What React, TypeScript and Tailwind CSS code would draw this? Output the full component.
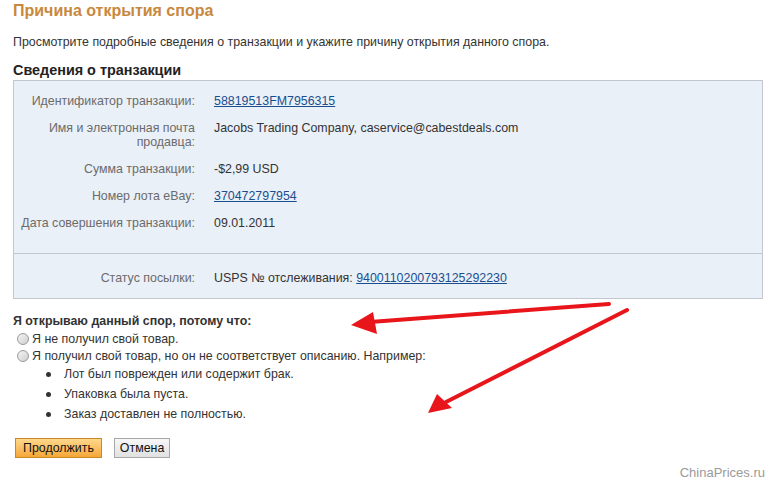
import React from 'react';

interface Row {
  label: string;
  value: string;
  link?: boolean;
}

const rows: Row[] = [
  { label: 'Идентификатор транзакции:', value: '58819513FM7956315', link: true },
  { label: 'Имя и электронная почта продавца:', value: 'Jacobs Trading Company, caservice@cabestdeals.com' },
  { label: 'Сумма транзакции:', value: '-$2,99 USD' },
  { label: 'Номер лота eBay:', value: '370472797954', link: true },
  { label: 'Дата совершения транзакции:', value: '09.01.2011' },
];

const bullets = [
  'Лот был поврежден или содержит брак.',
  'Упаковка была пуста.',
  'Заказ доставлен не полностью.',
];

function Radio() {
  return (
    <span className="inline-block w-[12px] h-[12px] rounded-full border border-[#9a9a9a] bg-gradient-to-br from-[#f4f4f4] to-[#cfcfcf] mr-[3px] shrink-0" />
  );
}

function Arrows() {
  return (
    <svg className="absolute inset-0 pointer-events-none" width="774" height="481">
      <g stroke="#e8161b" strokeWidth="4" strokeLinecap="round" fill="#e8161b">
        <line x1="609" y1="304" x2="370" y2="322" />
        <polygon points="351,325 373,312 377,334" stroke="none" />
        <line x1="627" y1="310" x2="446" y2="402" />
        <polygon points="428,413 437,394 452,408" stroke="none" />
      </g>
    </svg>
  );
}

export default function App() {
  return (
    <div
      className="relative w-[774px] h-[481px] bg-white overflow-hidden text-[12.4px] text-[#333]"
      style={{ fontFamily: '"Liberation Sans", Arial, sans-serif' }}
    >
      <div className="px-[13px]">
        <h1 className="text-[16px] font-bold text-[#c8883d] leading-[20px] pt-[1px]">
          Причина открытия спора
        </h1>
        <p className="mt-[13px] leading-[16px]">
          Просмотрите подробные сведения о транзакции и укажите причину открытия данного спора.
        </p>
        <h2 className="mt-[12px] text-[14.4px] font-bold text-[#222] leading-[16px]">
          Сведения о транзакции
        </h2>

        <div className="mt-[2px] w-[750px] border border-[#c3c7cd] bg-[#eaf0f8]">
          <div className="grid grid-cols-[181px_1fr] gap-x-[19px] gap-y-[13px] pt-[13px] pb-[23px] leading-[14px]">
            {rows.map((r) => (
              <React.Fragment key={r.label}>
                <div className="text-right text-[#6b6b6b] pl-[4px]">{r.label}</div>
                <div>
                  {r.link ? (
                    <a className="text-[#1b4e8f] underline">{r.value}</a>
                  ) : (
                    r.value
                  )}
                </div>
              </React.Fragment>
            ))}
          </div>
          <div className="border-t border-[#c3c8cf] grid grid-cols-[181px_1fr] gap-x-[19px] pt-[17px] pb-[13px] leading-[14px]">
            <div className="text-right text-[#6b6b6b]">Статус посылки:</div>
            <div>
              USPS № отслеживания:{' '}
              <a className="text-[#1b4e8f] underline">9400110200793125292230</a>
            </div>
          </div>
        </div>

        <div className="mt-[15px] font-bold leading-[14px]">Я открываю данный спор, потому что:</div>
        <div className="mt-[4px] pl-[4px] flex items-center leading-[14px]">
          <Radio />
          Я не получил свой товар.
        </div>
        <div className="mt-[3px] pl-[4px] flex items-center leading-[14px]">
          <Radio />
          Я получил свой товар, но он не соответствует описанию. Например:
        </div>
        <ul className="mt-[4px] pl-[33px] flex flex-col gap-[6px] leading-[14px]">
          {bullets.map((b) => (
            <li key={b} className="flex items-center">
              <span className="w-[5px] h-[5px] rounded-full bg-[#333] mr-[13px]" />
              {b}
            </li>
          ))}
        </ul>

        <div className="mt-[17px] pl-[2px] flex gap-[12px]">
          <button className="h-[20px] px-[7px] border border-[#c98a26] bg-gradient-to-b from-[#fed88a] to-[#f6a735] text-[#111] text-[12.4px] leading-[18px]">
            Продолжить
          </button>
          <button className="h-[20px] px-[5px] border border-[#a8a8a8] bg-gradient-to-b from-[#f7f7f7] to-[#e1e1e1] text-[#111] text-[12.4px] leading-[18px]">
            Отмена
          </button>
        </div>
      </div>

      <div className="absolute right-[9px] top-[463px] text-[13px] text-[#9a9a9a]">ChinaPrices.ru</div>
      <Arrows />
    </div>
  );
}
